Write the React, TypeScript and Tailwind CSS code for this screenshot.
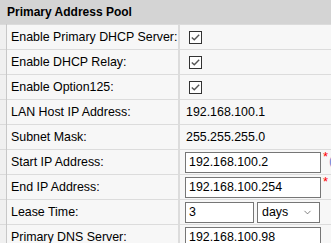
import { ChevronDown } from 'lucide-react';

type Row = {
  label: string;
  kind: 'check' | 'text' | 'input' | 'lease';
  value?: string;
  required?: boolean;
  hint?: boolean;
};

const ROWS: Row[] = [
  { label: 'Enable Primary DHCP Server:', kind: 'check' },
  { label: 'Enable DHCP Relay:', kind: 'check' },
  { label: 'Enable Option125:', kind: 'check' },
  { label: 'LAN Host IP Address:', kind: 'text', value: '192.168.100.1' },
  { label: 'Subnet Mask:', kind: 'text', value: '255.255.255.0' },
  { label: 'Start IP Address:', kind: 'input', value: '192.168.100.2', required: true, hint: true },
  { label: 'End IP Address:', kind: 'input', value: '192.168.100.254', required: true },
  { label: 'Lease Time:', kind: 'lease', value: '3' },
  { label: 'Primary DNS Server:', kind: 'input', value: '192.168.100.98' },
];

function Check() {
  return (
    <span className="ml-[4px] flex h-[13px] w-[13px] items-center justify-center border border-[#333] bg-white">
      <svg width="9" height="7" viewBox="0 0 9 7" fill="none">
        <path d="M0.8 3.4 L3.3 5.8 L8.2 0.8" stroke="#555" strokeWidth="1.4" />
      </svg>
    </span>
  );
}

function Value({ row }: { row: Row }) {
  if (row.kind === 'check') return <Check />;
  if (row.kind === 'text') return <span className="pl-[1px]">{row.value}</span>;
  if (row.kind === 'lease')
    return (
      <div className="flex gap-[3px]">
        <div className="flex h-[21px] w-[69px] items-center border border-[#767676] bg-white px-[3px]">{row.value}</div>
        <div className="flex h-[21px] w-[63px] items-center justify-between border border-[#767676] bg-white pl-[4px] pr-[6px]">
          <span>days</span>
          <ChevronDown className="h-[11px] w-[11px] text-[#555]" strokeWidth={1.6} />
        </div>
      </div>
    );
  return (
    <div className="flex items-start">
      <div className="flex h-[21px] w-[136px] items-center border border-[#767676] bg-white px-[3px]">{row.value}</div>
      {row.required && <span className="ml-[2px] -mt-[2px] text-[13px] leading-none text-[#ff0000]">*</span>}
      {row.hint && <span className="ml-[1px] text-[#6a7fd0]">(</span>}
    </div>
  );
}

export default function App() {
  return (
    <div className="h-[243px] w-[331px] overflow-hidden bg-[#f0f0f0] font-['Liberation_Sans',Arial,sans-serif] text-[12.4px] text-black">
      <div className="flex h-[24px] items-center bg-[#d4d4d4] pl-[7px] text-[12px] font-bold">Primary Address Pool</div>
      <div className="flex">
        <div className="w-[7px] shrink-0 border-r border-[#c8c8c8] bg-[#f0f0f0]">
          {ROWS.map((_, i) => (
            <div key={i} className="h-[25px] border-t border-[#dadada]" />
          ))}
        </div>
        <div className="flex-1">
          {ROWS.map((row) => (
            <div key={row.label} className="flex h-[25px] border-t border-[#dcdcdc] bg-[#f7f7f7]">
              <div className="flex w-[173px] shrink-0 items-center whitespace-nowrap border-r-2 border-[#dcdcdc] pl-[4px]">{row.label}</div>
              <div className="flex flex-1 items-center pl-[5px] whitespace-nowrap">
                <Value row={row} />
              </div>
            </div>
          ))}
        </div>
      </div>
    </div>
  );
}
